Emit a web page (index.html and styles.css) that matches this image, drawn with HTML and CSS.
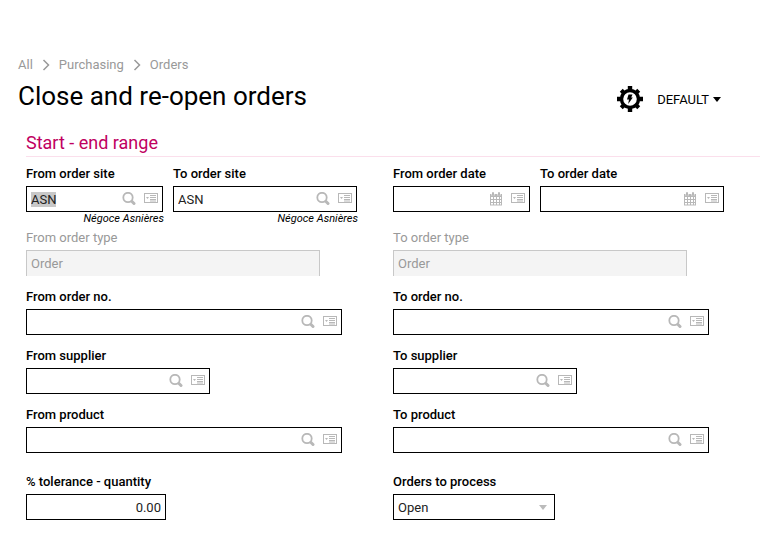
FILE: index.html
```html
<!DOCTYPE html>
<html lang="en">
<head>
  <meta charset="UTF-8">
  <meta name="viewport" content="width=device-width, initial-scale=1.0">
  <title>Close and re-open orders</title>
  <link rel="stylesheet" href="styles.css">
</head>
<body>

<!-- Shared icons -->
<svg class="sprite" aria-hidden="true">
  <symbol id="icon-search" viewBox="0 0 14 14">
    <circle cx="6" cy="5.500" r="4.700" fill="none" stroke="currentColor" stroke-width="1.800"/>
    <path d="M10 9.500L12 11.500" stroke="currentColor" stroke-width="3" stroke-linecap="round"/>
  </symbol>
  <symbol id="icon-card" viewBox="0 0 14 14">
    <rect x="0.500" y="1.500" width="13" height="9" fill="none" stroke="currentColor"/>
    <path d="M2 5h3L3.500 7z" fill="currentColor"/>
    <path d="M6 3.500h6M6 5.500h6M6 7.500h6M6 9h6" stroke="currentColor"/>
  </symbol>
  <symbol id="icon-calendar" viewBox="0 0 14 14">
    <path d="M1 2h12v11.500H1z" fill="currentColor"/>
    <path d="M2 5h2v2H2zM5 5h2v2H5zM8 5h2v2H8zM11 5h1v2h-1zM2 8h2v2H2zM5 8h2v2H5zM8 8h2v2H8zM11 8h1v2h-1zM2 11h2v1.500H2zM5 11h2v1.500H5zM8 11h2v1.500H8zM11 11h1v1.500h-1z" fill="#fff"/>
    <path d="M4 1v2.500M10 1v2.500" stroke="#fff" stroke-width="3"/>
    <path d="M4 1v2M10 1v2" stroke="currentColor" stroke-width="2" stroke-linecap="round"/>
  </symbol>
  <symbol id="icon-chevron" viewBox="0 0 8 12">
    <path d="M1.500 1l5 5-5 5" fill="none" stroke="currentColor" stroke-width="1.500"/>
  </symbol>
</svg>

<header class="page-header">
  <nav class="breadcrumb" aria-label="Breadcrumb">
    <a href="#">All</a>
    <svg class="chevron"><use href="#icon-chevron"/></svg>
    <a href="#">Purchasing</a>
    <svg class="chevron"><use href="#icon-chevron"/></svg>
    <a href="#">Orders</a>
  </nav>
  <div class="title-bar">
    <h1>Close and re-open orders</h1>
    <div class="actions">
      <button type="button" class="gear-button" aria-label="Actions">
        <svg viewBox="-13 -13 26 26">
          <circle r="8.500" fill="none" stroke="currentColor" stroke-width="3.400"/>
          <g fill="currentColor">
            <path id="teeth" d="M-2.200 -13h4.400v4h-4.400zM-2.200 9h4.400v4h-4.400zM-13 -2.200h4v4.400h-4zM9 -2.200h4v4.400h-4z"/>
            <use href="#teeth" transform="rotate(45) scale(0.950)"/>
            <path d="M-1.500 -4.500h4L1.200 -1.500h1.600L-1.800 5l0.800-4.500h-2z"/>
          </g>
        </svg>
      </button>
      <button type="button" class="view-button">DEFAULT <span class="caret"></span></button>
    </div>
  </div>
</header>

<main class="section">
  <h2>Start - end range</h2>

  <form class="range-form">
    <div class="column">
      <div class="pair">
        <div class="field size-small">
          <label for="from-site">From order site</label>
          <div class="box">
            <input type="text" id="from-site" value="ASN">
            <button type="button" aria-label="Search"><svg><use href="#icon-search"/></svg></button>
            <button type="button" aria-label="Actions"><svg><use href="#icon-card"/></svg></button>
          </div>
          <p class="hint">Négoce Asnières</p>
        </div>
        <div class="field size-medium">
          <label for="to-site">To order site</label>
          <div class="box">
            <input type="text" id="to-site" value="ASN">
            <button type="button" aria-label="Search"><svg><use href="#icon-search"/></svg></button>
            <button type="button" aria-label="Actions"><svg><use href="#icon-card"/></svg></button>
          </div>
          <p class="hint">Négoce Asnières</p>
        </div>
      </div>

      <div class="field size-type disabled">
        <label for="from-type">From order type</label>
        <div class="box">
          <input type="text" id="from-type" value="Order" disabled>
        </div>
      </div>

      <div class="field size-large">
        <label for="from-order">From order no.</label>
        <div class="box">
          <input type="text" id="from-order">
          <button type="button" aria-label="Search"><svg><use href="#icon-search"/></svg></button>
          <button type="button" aria-label="Actions"><svg><use href="#icon-card"/></svg></button>
        </div>
      </div>

      <div class="field size-medium">
        <label for="from-supplier">From supplier</label>
        <div class="box">
          <input type="text" id="from-supplier">
          <button type="button" aria-label="Search"><svg><use href="#icon-search"/></svg></button>
          <button type="button" aria-label="Actions"><svg><use href="#icon-card"/></svg></button>
        </div>
      </div>

      <div class="field size-large">
        <label for="from-product">From product</label>
        <div class="box">
          <input type="text" id="from-product">
          <button type="button" aria-label="Search"><svg><use href="#icon-search"/></svg></button>
          <button type="button" aria-label="Actions"><svg><use href="#icon-card"/></svg></button>
        </div>
      </div>

      <div class="field size-number spaced">
        <label for="tolerance">% tolerance - quantity</label>
        <div class="box">
          <input type="text" id="tolerance" class="number" value="0.00">
        </div>
      </div>
    </div>

    <div class="column">
      <div class="pair">
        <div class="field size-small">
          <label for="from-date">From order date</label>
          <div class="box">
            <input type="text" id="from-date">
            <button type="button" aria-label="Pick a date"><svg><use href="#icon-calendar"/></svg></button>
            <button type="button" aria-label="Actions"><svg><use href="#icon-card"/></svg></button>
          </div>
        </div>
        <div class="field size-medium">
          <label for="to-date">To order date</label>
          <div class="box">
            <input type="text" id="to-date">
            <button type="button" aria-label="Pick a date"><svg><use href="#icon-calendar"/></svg></button>
            <button type="button" aria-label="Actions"><svg><use href="#icon-card"/></svg></button>
          </div>
        </div>
      </div>

      <div class="field size-type disabled">
        <label for="to-type">To order type</label>
        <div class="box">
          <input type="text" id="to-type" value="Order" disabled>
        </div>
      </div>

      <div class="field size-large">
        <label for="to-order">To order no.</label>
        <div class="box">
          <input type="text" id="to-order">
          <button type="button" aria-label="Search"><svg><use href="#icon-search"/></svg></button>
          <button type="button" aria-label="Actions"><svg><use href="#icon-card"/></svg></button>
        </div>
      </div>

      <div class="field size-medium">
        <label for="to-supplier">To supplier</label>
        <div class="box">
          <input type="text" id="to-supplier">
          <button type="button" aria-label="Search"><svg><use href="#icon-search"/></svg></button>
          <button type="button" aria-label="Actions"><svg><use href="#icon-card"/></svg></button>
        </div>
      </div>

      <div class="field size-large">
        <label for="to-product">To product</label>
        <div class="box">
          <input type="text" id="to-product">
          <button type="button" aria-label="Search"><svg><use href="#icon-search"/></svg></button>
          <button type="button" aria-label="Actions"><svg><use href="#icon-card"/></svg></button>
        </div>
      </div>

      <div class="field size-select spaced">
        <label for="process">Orders to process</label>
        <div class="box">
          <select id="process">
            <option>Open</option>
            <option>Closed</option>
          </select>
          <span class="caret"></span>
        </div>
      </div>
    </div>
  </form>
</main>

<script>
  // Start on the first field with its value selected
  const firstField = document.getElementById('from-site');
  firstField.focus();
  firstField.select();
</script>

</body>
</html>
```
FILE: styles.css
```css
* {
  box-sizing: border-box;
}

body {
  font-family: Roboto, "Liberation Sans", sans-serif;
  font-size: 13px;
  margin: 0;
  padding: 57px 5px 16px 18px;
  color: #000;
  background-color: #fff;
}

button {
  border: none;
  background: none;
  padding: 0;
  font: inherit;
  color: inherit;
  cursor: pointer;
}

.sprite {
  display: none;
}

/* Header */
.breadcrumb {
  display: flex;
  align-items: center;
  gap: 9px;
  line-height: 16px;
}

.breadcrumb a {
  color: #999;
  text-decoration: none;
}

.chevron {
  width: 8px;
  height: 12px;
  color: #999;
}

.title-bar {
  display: flex;
  justify-content: space-between;
  align-items: center;
  margin-top: 5px;
}

h1 {
  margin: 0;
  font-size: 26px;
  font-weight: 400;
  line-height: 36px;
}

.actions {
  display: flex;
  align-items: center;
  gap: 14px;
  padding-top: 6px;
  padding-right: 39px;
}

.gear-button {
  width: 26px;
  height: 26px;
}

.gear-button svg {
  display: block;
}

.view-button {
  display: flex;
  align-items: center;
  gap: 4px;
}

.caret {
  border: 4px solid transparent;
  border-top: 5px solid currentColor;
  border-bottom: none;
}

/* Section */
.section {
  padding-left: 8px;
}

h2 {
  margin: 17px 0 9px;
  padding-bottom: 1px;
  border-bottom: 1px solid #fbdfec;
  color: #c0005f;
  font-size: 18px;
  font-weight: 400;
  line-height: 24px;
}

.range-form {
  display: grid;
  grid-template-columns: 1fr 1fr;
}

.pair {
  display: flex;
  gap: 10px;
  min-height: 64px;
}

.field {
  max-width: 100%;
  margin-bottom: 13px;
}

.pair .field {
  margin-bottom: 0;
}

.spaced {
  margin-top: 21px;
}

.field label {
  display: block;
  margin-bottom: 4px;
  font-weight: 500;
  line-height: 16px;
}

.size-small { width: 137px; }
.size-number { width: 140px; }
.size-select { width: 162px; }
.size-medium { width: 184px; }
.size-type { width: 294px; }
.size-large { width: 316px; }

.box {
  display: flex;
  height: 26px;
  padding-right: 4px;
  border: 1px solid #000;
}

.box input,
.box select {
  flex: 1;
  min-width: 0;
  padding: 0 4px;
  border: none;
  outline: none;
  background: none;
  font: inherit;
  color: #222;
}

.box input::selection {
  background-color: #c8c8c8;
  color: #222;
}

.box select {
  appearance: none;
}

.box .number {
  padding-right: 0;
  text-align: right;
}

.box button {
  color: #b8b8b8;
  margin-left: 8px;
}

.box svg {
  display: block;
  width: 14px;
  height: 14px;
}

.box .caret {
  align-self: center;
  margin-right: 3px;
  color: #bbb;
}

.hint {
  margin: 0 -1px 0 0;
  font-size: 11px;
  font-style: italic;
  line-height: 14px;
  text-align: right;
}

.disabled label {
  color: #999;
  font-weight: 400;
}

.disabled .box {
  border-color: #c8c8c8;
  border-bottom: none;
  background-color: #f4f4f4;
}

.disabled input {
  color: #999;
}
```
